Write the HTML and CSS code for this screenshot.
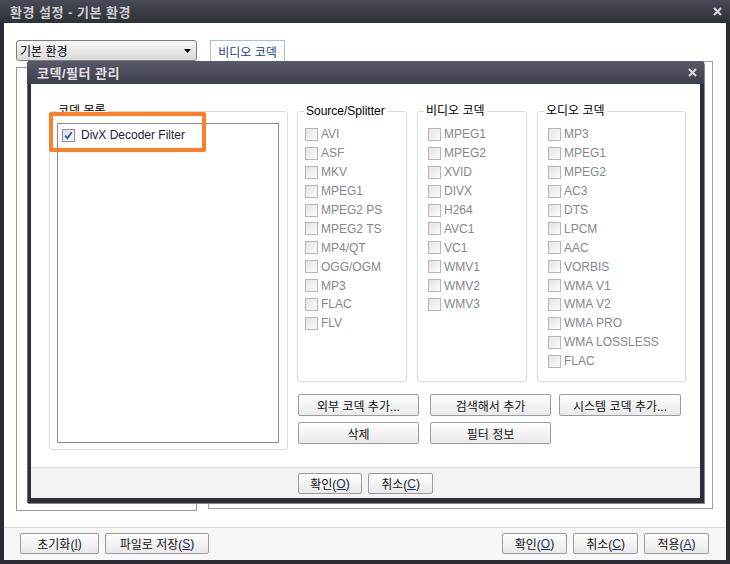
FILE: index.html
```html
<!doctype html>
<html lang="ko">

<head>
  <meta charset="utf-8">
  <title>환경 설정 - 기본 환경</title>
  <link rel="stylesheet" href="styles.css">
</head>

<body>
  <div class="window">
    <div class="titlebar">
      <span>환경 설정 - 기본 환경</span>
      <svg class="close" width="9" height="9" viewBox="0 0 9 9"><path d="M1 1L8 8M8 1L1 8"/></svg>
    </div>

    <div class="client">
      <div class="top-row">
        <div class="combo">
          <span>기본 환경</span>
          <svg width="7" height="4" viewBox="0 0 7 4"><path d="M0 0H7L3.5 4Z" fill="#000"/></svg>
        </div>
        <div class="tab">비디오 코덱</div>
      </div>

      <div class="panels">
        <div class="panel-left"></div>
        <div class="panel-right"></div>
      </div>

      <div class="footer">
        <div class="btn-line">
          <button class="btn w79">초기화(<u>I</u>)</button>
          <button class="btn w104">파일로 저장(<u>S</u>)</button>
        </div>
        <div class="btn-line">
          <button class="btn w65">확인(<u>O</u>)</button>
          <button class="btn w65">취소(<u>C</u>)</button>
          <button class="btn w65">적용(<u>A</u>)</button>
        </div>
      </div>
    </div>

    <!-- codec / filter manager dialog -->
    <div class="dialog">
      <div class="dlg-title">
        <span>코덱/필터 관리</span>
        <svg class="close" width="9" height="9" viewBox="0 0 9 9"><path d="M1 1L8 8M8 1L1 8"/></svg>
      </div>
      <div class="dlg-body">
        <div class="dlg-main">
          <div class="group list-group">
            <span class="legend">코덱 목록</span>
            <div class="listbox">
              <div class="list-item">
                <span class="check on">
                  <svg width="11" height="11" viewBox="0 0 11 11"><path d="M2.2 5.6L4.4 8.2L8.6 2.2"/></svg>
                </span>
                DivX Decoder Filter
              </div>
            </div>
          </div>

          <div class="right-col">
            <div class="groups">
              <div class="group codec-group source">
                <span class="legend">Source/Splitter</span>
                <div class="items">
                  <div class="item"><span class="check"></span>AVI</div>
                  <div class="item"><span class="check"></span>ASF</div>
                  <div class="item"><span class="check"></span>MKV</div>
                  <div class="item"><span class="check"></span>MPEG1</div>
                  <div class="item"><span class="check"></span>MPEG2 PS</div>
                  <div class="item"><span class="check"></span>MPEG2 TS</div>
                  <div class="item"><span class="check"></span>MP4/QT</div>
                  <div class="item"><span class="check"></span>OGG/OGM</div>
                  <div class="item"><span class="check"></span>MP3</div>
                  <div class="item"><span class="check"></span>FLAC</div>
                  <div class="item"><span class="check"></span>FLV</div>
                </div>
              </div>

              <div class="group codec-group">
                <span class="legend">비디오 코덱</span>
                <div class="items">
                  <div class="item"><span class="check"></span>MPEG1</div>
                  <div class="item"><span class="check"></span>MPEG2</div>
                  <div class="item"><span class="check"></span>XVID</div>
                  <div class="item"><span class="check"></span>DIVX</div>
                  <div class="item"><span class="check"></span>H264</div>
                  <div class="item"><span class="check"></span>AVC1</div>
                  <div class="item"><span class="check"></span>VC1</div>
                  <div class="item"><span class="check"></span>WMV1</div>
                  <div class="item"><span class="check"></span>WMV2</div>
                  <div class="item"><span class="check"></span>WMV3</div>
                </div>
              </div>

              <div class="group codec-group audio">
                <span class="legend">오디오 코덱</span>
                <div class="items">
                  <div class="item"><span class="check"></span>MP3</div>
                  <div class="item"><span class="check"></span>MPEG1</div>
                  <div class="item"><span class="check"></span>MPEG2</div>
                  <div class="item"><span class="check"></span>AC3</div>
                  <div class="item"><span class="check"></span>DTS</div>
                  <div class="item"><span class="check"></span>LPCM</div>
                  <div class="item"><span class="check"></span>AAC</div>
                  <div class="item"><span class="check"></span>VORBIS</div>
                  <div class="item"><span class="check"></span>WMA V1</div>
                  <div class="item"><span class="check"></span>WMA V2</div>
                  <div class="item"><span class="check"></span>WMA PRO</div>
                  <div class="item"><span class="check"></span>WMA LOSSLESS</div>
                  <div class="item"><span class="check"></span>FLAC</div>
                </div>
              </div>
            </div>

            <div class="btn-rows">
              <div class="btn-row">
                <button class="btn tall w121">외부 코덱 추가...</button>
                <button class="btn tall w121 gap11">검색해서 추가</button>
                <button class="btn tall w122 gap8">시스템 코덱 추가...</button>
              </div>
              <div class="btn-row">
                <button class="btn tall w121">삭제</button>
                <button class="btn tall w121 gap11">필터 정보</button>
              </div>
            </div>
          </div>

          <div class="highlight"></div>
        </div>

        <div class="dlg-footer">
          <button class="btn w64">확인(<u>O</u>)</button>
          <button class="btn w65">취소(<u>C</u>)</button>
        </div>
      </div>
    </div>
  </div>
</body>
</html>
```

FILE: styles.css
```css
body {
  margin: 0;
  font-family: "Liberation Sans", "Noto Sans CJK KR", sans-serif;
  font-size: 12px;
}

.window {
  position: relative;
  width: 730px;
  height: 564px;
  background: #2a2b33;
  display: flex;
  flex-direction: column;
}

.titlebar {
  height: 23px;
  flex: none;
  display: flex;
  align-items: center;
  justify-content: space-between;
  padding: 0 8px 0 10px;
  background: linear-gradient(#484a55, #2f3139);
  color: #cdced3;
  font-weight: bold;
  font-size: 13px;
  letter-spacing: 0.5px;
}
.close path {
  stroke: #d6d7dc;
  stroke-width: 2.2;
}

.client {
  flex: 1;
  margin: 0 4px 4px;
  background: #fff;
  display: flex;
  flex-direction: column;
}

.top-row {
  display: flex;
  margin: 17px 0 0 12px;
  height: 21px;
}
.combo {
  box-sizing: border-box;
  width: 181px;
  height: 21px;
  border: 1px solid #7b7b7b;
  border-radius: 3px;
  background: linear-gradient(#f6f6f6, #dadada);
  display: flex;
  align-items: center;
  justify-content: space-between;
  padding: 0 5px 0 3px;
}
.tab {
  box-sizing: border-box;
  margin-left: 13px;
  width: 75px;
  height: 21px;
  border: 1px solid #aabcd6;
  border-bottom: none;
  color: #2a3e8c;
  display: flex;
  align-items: center;
  justify-content: center;
}

.panels {
  display: flex;
  align-items: flex-start;
  margin-left: 12px;
}
.panel-left {
  box-sizing: border-box;
  margin-top: 6px;
  width: 181px;
  height: 444px;
  border: 1px solid #989898;
}
.panel-right {
  box-sizing: border-box;
  margin-left: 11px;
  width: 505px;
  height: 448px;
  border: 1px solid #a2a2a2;
}

.footer {
  margin-top: auto;
  height: 33px;
  box-sizing: border-box;
  border-top: 1px solid #dadada;
  background: #f7f7f7;
  display: flex;
  justify-content: space-between;
  padding: 5px 17px 0 16px;
}
.btn-line {
  display: flex;
  gap: 6px;
}

.btn {
  box-sizing: border-box;
  height: 21px;
  padding: 0;
  border: 1px solid #9c9c9c;
  border-radius: 2px;
  background: linear-gradient(#fefefe, #e9e9e9);
  font: inherit;
  color: #111;
  display: inline-flex;
  align-items: center;
  justify-content: center;
}
.btn u {
  color: #1d2f6e;
}
.btn.tall {
  height: 22px;
}
.w64 { width: 64px; }
.w65 { width: 65px; }
.w79 { width: 79px; }
.w104 { width: 104px; }
.w121 { width: 121px; }
.w122 { width: 122px; }
.gap11 { margin-left: 11px; }
.gap8 { margin-left: 8px; }

/* dialog */
.dialog {
  position: absolute;
  left: 27px;
  top: 61px;
  width: 677px;
  height: 442px;
  background: #2d2e37;
  border-radius: 3px 3px 0 0;
  box-shadow: inset 1px 1px 0 #6b6d78, 1px 1px 0 #8a8a8a;
  display: flex;
  flex-direction: column;
}
.dlg-title {
  height: 23px;
  flex: none;
  display: flex;
  align-items: center;
  justify-content: space-between;
  padding: 0 7px 0 10px;
  border-radius: 3px 3px 0 0;
  background: linear-gradient(#585a67, #3c3e4a);
  color: #e2e2e6;
  font-weight: bold;
  font-size: 13px;
  letter-spacing: 0.5px;
}
.dlg-body {
  flex: 1;
  margin: 0 4px 5px;
  background: #fff;
  display: flex;
  flex-direction: column;
}
.dlg-main {
  position: relative;
  height: 383px;
  flex: none;
  box-sizing: border-box;
  display: flex;
  align-items: flex-start;
  padding: 27px 0 0 18px;
}
.dlg-footer {
  flex: 1;
  box-sizing: border-box;
  border-top: 1px solid #d9d9d9;
  background: #f3f3f3;
  display: flex;
  justify-content: center;
  gap: 6px;
  padding-top: 5px;
}

.group {
  box-sizing: border-box;
  border: 1px solid #d4dce5;
  border-radius: 3px;
}
.legend {
  display: block;
  width: fit-content;
  margin: -8px 0 0 6px;
  padding: 0 2px;
  background: #fff;
  line-height: 14px;
  color: #000;
}

.list-group {
  width: 239px;
  height: 339px;
}
.listbox {
  box-sizing: border-box;
  margin: 5px 0 0 7px;
  width: 222px;
  height: 320px;
  border: 1px solid #868b94;
  padding: 4px 4px;
}
.list-item {
  display: flex;
  align-items: center;
  gap: 6px;
  line-height: 14px;
  color: #1b1b3a;
}

.right-col {
  margin-left: 9px;
  display: flex;
  flex-direction: column;
}
.groups {
  display: flex;
  gap: 10px;
}
.codec-group {
  width: 110px;
  height: 271px;
}
.codec-group.audio {
  width: 149px;
}
.items {
  padding: 7px 0 0 10px;
}
.source .items {
  padding-left: 7px;
}
.item {
  display: flex;
  align-items: center;
  gap: 3px;
  height: 18.9px;
  color: #85868d;
}
.check {
  box-sizing: border-box;
  flex: none;
  width: 13px;
  height: 13px;
  border: 1px solid #b6b6b6;
  background: linear-gradient(135deg, #e4e4e4, #fbfbfb);
  display: flex;
}
.check.on {
  border-color: #8e8f94;
  background: linear-gradient(135deg, #dcdde2, #f8f8fa);
}
.check.on path {
  fill: none;
  stroke: #3d55a8;
  stroke-width: 1.8;
}

.btn-rows {
  margin: 12px 0 0 1px;
  display: flex;
  flex-direction: column;
  gap: 6px;
}
.btn-row {
  display: flex;
}

.highlight {
  position: absolute;
  left: 18px;
  top: 28px;
  width: 157px;
  height: 40px;
  box-sizing: border-box;
  border: 4px solid #ff7f27;
  border-radius: 2px;
}
```
